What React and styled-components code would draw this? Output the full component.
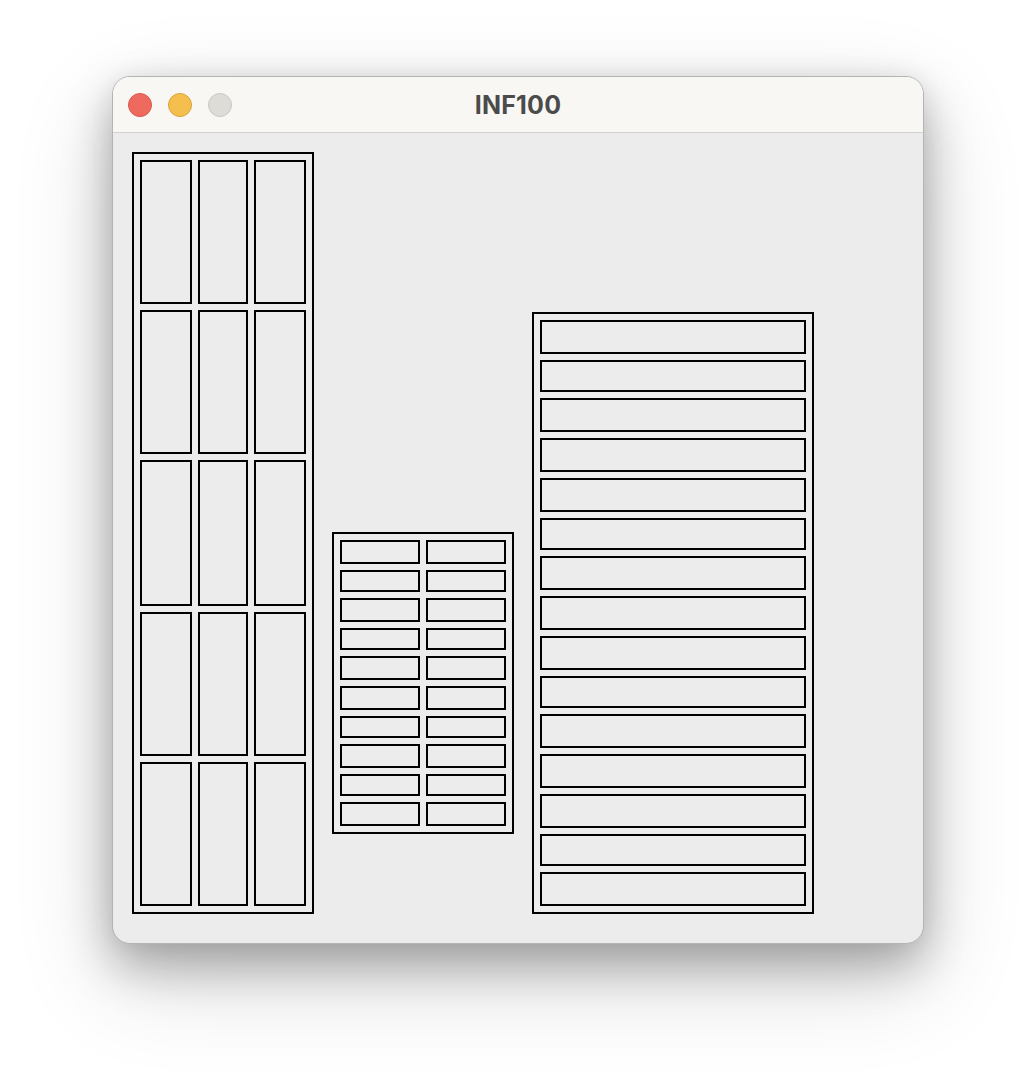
import styled, { createGlobalStyle } from 'styled-components';

const GlobalStyle = createGlobalStyle`
  html, body {
    margin: 0;
    padding: 0;
    background: #ffffff;
  }
  * {
    box-sizing: border-box;
  }
`;

const Page = styled.div`
  width: 1036px;
  height: 1092px;
  padding: 76px 0 0 112px;
  overflow: hidden;
`;

const Window = styled.div`
  width: 812px;
  height: 868px;
  display: flex;
  flex-direction: column;
  border: 1px solid #b4b4b4;
  border-radius: 18px;
  overflow: hidden;
  background: #ececec;
  box-shadow: 0 22px 48px rgba(0, 0, 0, 0.28), 0 34px 100px rgba(0, 0, 0, 0.16), 0 0 24px rgba(0, 0, 0, 0.06);
`;

const TitleBar = styled.div`
  height: 56px;
  flex: none;
  display: grid;
  grid-template-columns: 1fr auto 1fr;
  align-items: center;
  padding: 0 15px;
  background: #f8f7f3;
  border-bottom: 1px solid #d3d2cf;
`;

const Lights = styled.div`
  display: flex;
  gap: 16px;
`;

const Light = styled.span`
  width: 24px;
  height: 24px;
  border-radius: 50%;
  background: ${(p) => p.$fill};
  border: 1px solid ${(p) => p.$edge};
`;

const Title = styled.div`
  font-family: Inter, "Open Sans", "Liberation Sans", sans-serif;
  font-weight: 700;
  font-size: 25px;
  color: #4b4b4b;
  letter-spacing: 0.2px;
`;

const Canvas = styled.div`
  flex: 1;
  display: flex;
  align-items: flex-start;
  gap: 18px;
  padding: 19px 0 0 19px;
`;

const Board = styled.div`
  margin-top: ${(p) => p.$top}px;
  display: grid;
  grid-template-columns: ${(p) => p.$cols.map((c) => `${c}px`).join(' ')};
  grid-template-rows: ${(p) => p.$rows.map((r) => `${r}px`).join(' ')};
  gap: 6px;
  padding: 6px;
  border: 2px solid #000;
`;

const Cell = styled.div`
  border: 2px solid #000;
`;

const boards = [
  { top: 0, cols: [52, 50, 52], rows: [144, 144, 146, 144, 144] },
  { top: 380, cols: [80, 80], rows: [24, 22, 24, 22, 24, 24, 22, 24, 22, 24] },
  { top: 160, cols: [266], rows: [34, 32, 34, 34, 34, 32, 34, 34, 34, 32, 34, 34, 34, 32, 34] },
];

export default function App() {
  return (
    <Page>
      <GlobalStyle />
      <Window>
        <TitleBar>
          <Lights>
            <Light $fill="#ee6a5f" $edge="#d8564c" />
            <Light $fill="#f5bf4f" $edge="#d9a33d" />
            <Light $fill="#dddcd7" $edge="#c8c7c2" />
          </Lights>
          <Title>INF100</Title>
          <span />
        </TitleBar>
        <Canvas>
          {boards.map((b, i) => (
            <Board key={i} $top={b.top} $cols={b.cols} $rows={b.rows}>
              {Array.from({ length: b.cols.length * b.rows.length }).map((_, j) => (
                <Cell key={j} />
              ))}
            </Board>
          ))}
        </Canvas>
      </Window>
    </Page>
  );
}
